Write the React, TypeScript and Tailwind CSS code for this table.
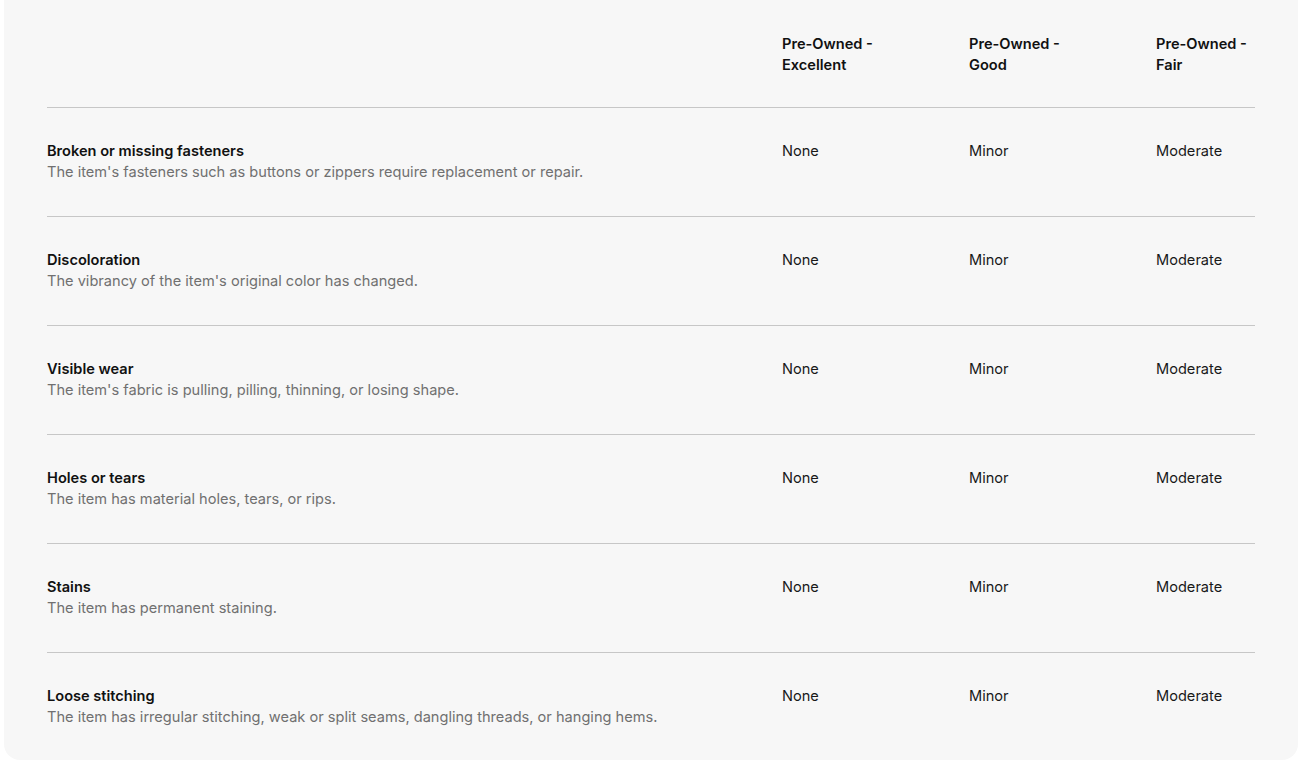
import React from "react";

const rows = [
  { title: "Broken or missing fasteners", desc: "The item's fasteners such as buttons or zippers require replacement or repair." },
  { title: "Discoloration", desc: "The vibrancy of the item's original color has changed." },
  { title: "Visible wear", desc: "The item's fabric is pulling, pilling, thinning, or losing shape." },
  { title: "Holes or tears", desc: "The item has material holes, tears, or rips." },
  { title: "Stains", desc: "The item has permanent staining." },
  { title: "Loose stitching", desc: "The item has irregular stitching, weak or split seams, dangling threads, or hanging hems." },
];

const grades = ["Excellent", "Good", "Fair"];

export default function App() {
  return (
    <div className="min-h-[765px] bg-white" style={{ fontFamily: "Inter, 'Noto Sans', sans-serif" }}>
      <div className="mx-[4px] h-[760px] rounded-b-[16px] bg-[#f7f7f7] px-[43px]">
        <div className="grid grid-cols-[735px_187px_187px_100px] pt-[34px] pb-[31px] text-[14.6px] font-semibold leading-[21px] text-[#111]">
          <div />
          {grades.map((g) => (
            <div key={g} className="w-[100px]">
              Pre-Owned - {g}
            </div>
          ))}
        </div>
        {rows.map((r) => (
          <div
            key={r.title}
            className="grid grid-cols-[735px_187px_187px_100px] border-t border-[#c7c7c7] pt-[33px] pb-[33px] text-[14.6px] leading-[21px]"
          >
            <div>
              <div className="font-semibold text-[#111]">{r.title}</div>
              <div className="text-[#707070]">{r.desc}</div>
            </div>
            <div className="text-[#191919]">None</div>
            <div className="text-[#191919]">Minor</div>
            <div className="text-[#191919]">Moderate</div>
          </div>
        ))}
      </div>
    </div>
  );
}
